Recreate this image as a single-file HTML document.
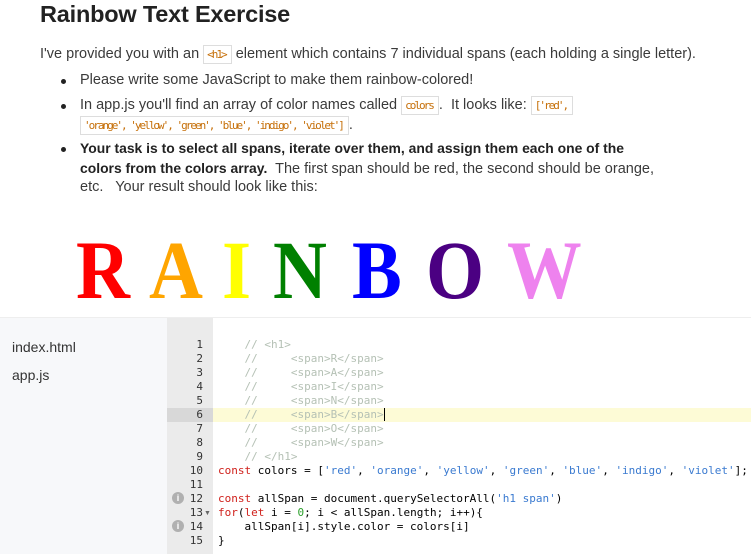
<!DOCTYPE html>
<html><head><style>
body{margin:0;width:751px;height:554px;overflow:hidden;background:#fff;font-family:"Liberation Sans",sans-serif;color:#333;position:relative}
.a{position:absolute;white-space:nowrap}
h1{position:absolute;left:40px;top:0;margin:0;font-size:23.5px;line-height:28px;color:#222;font-weight:bold;letter-spacing:-0.2px}
.t{font-size:14.5px;color:#3a3a3a}
.t b{font-size:13.9px}
code{font-family:"DejaVu Sans Mono",monospace;font-size:11px;letter-spacing:-2px;color:#c6700a;border:1px solid #ddd;padding:2px 5px 2px 3px;background:#fff}
.dot{position:absolute;width:5px;height:5px;border-radius:50%;background:#222}
.L{position:absolute;top:229px;font-family:"Liberation Serif",serif;font-weight:bold;font-size:83px;line-height:1}
.left{position:absolute;left:0;top:318px;width:167px;height:236px;background:#f7f8fa}
.gut{position:absolute;left:167px;top:318px;width:46px;height:236px;background:#ebebeb}
.top{position:absolute;left:0;top:317px;width:751px;height:1px;background:#eee}
.ln{position:absolute;left:167px;width:36px;text-align:right;font-family:"DejaVu Sans Mono",monospace;font-size:11px;color:#333;line-height:14px}
.code{position:absolute;left:218px;font-family:"DejaVu Sans Mono",monospace;font-size:11px;line-height:14px;white-space:pre;color:#000}
.c{color:#b5c1b5}.k{color:#d0211c}.s{color:#3a7ad0}.n{color:#2ca02c}
.info{position:absolute;left:172px;width:12px;height:12px;border-radius:50%;background:#b0b0b0;color:#fff;font-size:9px;font-weight:bold;text-align:center;line-height:12px}
</style></head><body>
<h1>Rainbow Text Exercise</h1>
<div class="a t" style="left:40px;top:46px">I've provided you with an <code>&lt;h1&gt;</code> element which contains 7 individual spans (each holding a single letter).</div>
<div class="dot" style="left:61px;top:79px"></div>
<div class="a t" style="left:80px;top:72px">Please write some JavaScript to make them rainbow-colored!</div>
<div class="dot" style="left:61px;top:104px"></div>
<div class="a t" style="left:80px;top:97px">In app.js you'll find an array of color names called <code>colors</code>. &nbsp;It looks like: <code>['red',</code></div>
<div class="a t" style="left:80px;top:117px"><code>'orange', 'yellow', 'green', 'blue', 'indigo', 'violet']</code>.</div>
<div class="dot" style="left:61px;top:147px"></div>
<div class="a t" style="left:80px;top:140px"><b style="color:#222">Your task is to select all spans, iterate over them, and assign them each one of the</b></div>
<div class="a t" style="left:80px;top:160px"><b style="color:#222">colors from the colors array.</b>&nbsp; The first span should be red, the second should be orange,</div>
<div class="a t" style="left:80px;top:179px">etc. &nbsp; Your result should look like this:</div>
<div class="L" style="left:76px;color:red;transform:scaleX(0.9);transform-origin:left">R</div>
<div class="L" style="left:149px;color:orange;transform:scaleX(0.9);transform-origin:left">A</div>
<div class="L" style="left:222px;color:yellow;transform:scaleX(0.9);transform-origin:left">I</div>
<div class="L" style="left:273px;color:green;transform:scaleX(0.9);transform-origin:left">N</div>
<div class="L" style="left:352px;color:blue;transform:scaleX(0.9);transform-origin:left">B</div>
<div class="L" style="left:426px;color:indigo;transform:scaleX(0.9);transform-origin:left">O</div>
<div class="L" style="left:507px;color:violet;transform:scaleX(0.9);transform-origin:left">W</div>
<div class="top"></div>
<div class="left"></div>
<div class="a" style="left:12px;top:339px;font-size:14px;color:#333">index.html</div>
<div class="a" style="left:12px;top:367px;font-size:14px;color:#333">app.js</div>
<div class="gut"></div>
<div class="a" style="left:167px;top:408px;width:46px;height:14px;background:#d8d8d8"></div>
<div class="a" style="left:213px;top:408px;width:538px;height:14px;background:#fdfbd6"></div>
<div class="ln" style="top:338px">1<br>2<br>3<br>4<br>5<br>6<br>7<br>8<br>9<br>10<br>11<br>12<br>13<br>14<br>15</div>
<div class="a" style="left:204px;top:510px;font-size:7px;color:#666">▼</div>
<div class="info" style="top:492px">i</div>
<div class="info" style="top:520px">i</div>
<div class="code" style="top:338px"><span class="c">    // &lt;h1&gt;
    //     &lt;span&gt;R&lt;/span&gt;
    //     &lt;span&gt;A&lt;/span&gt;
    //     &lt;span&gt;I&lt;/span&gt;
    //     &lt;span&gt;N&lt;/span&gt;
    //     &lt;span&gt;B&lt;/span&gt;</span><span style="border-left:1px solid #000"></span><span class="c">
    //     &lt;span&gt;O&lt;/span&gt;
    //     &lt;span&gt;W&lt;/span&gt;
    // &lt;/h1&gt;</span>
<span class="k">const</span> colors = [<span class="s">'red'</span>, <span class="s">'orange'</span>, <span class="s">'yellow'</span>, <span class="s">'green'</span>, <span class="s">'blue'</span>, <span class="s">'indigo'</span>, <span class="s">'violet'</span>];

<span class="k">const</span> allSpan = document.querySelectorAll(<span class="s">'h1 span'</span>)
<span class="k">for</span>(<span class="k">let</span> i = <span class="n">0</span>; i &lt; allSpan.length; i++){
    allSpan[i].style.color = colors[i]
}</div>
</body></html>
